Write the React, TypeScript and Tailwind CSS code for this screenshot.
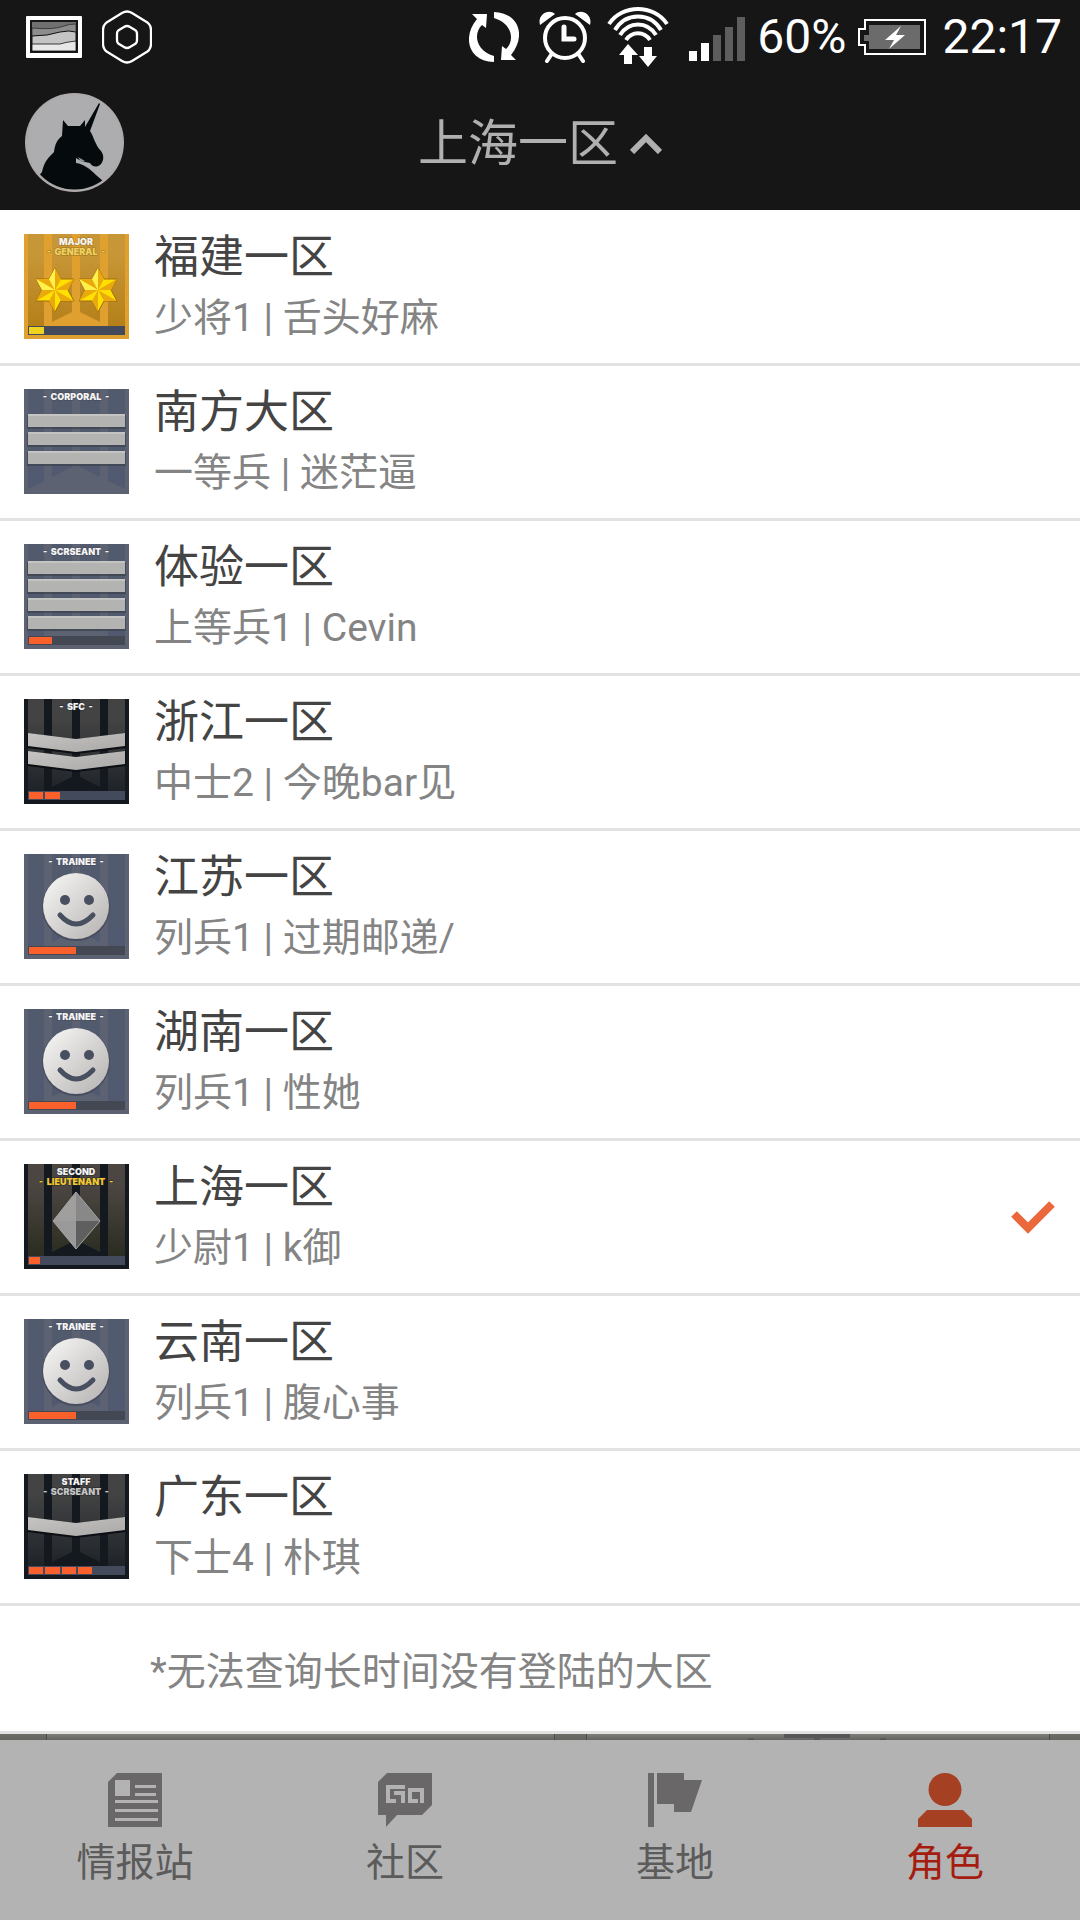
import { useState } from 'react';

type BadgeKind = 'general' | 'corporal' | 'sergeant' | 'sfc' | 'trainee' | 'lieutenant' | 'staff';

interface Zone {
  id: string;
  name: string;
  rank: string;
  player: string;
  badge: BadgeKind;
}

const zones: Zone[] = [
  { id: 'fujian', name: '福建一区', rank: '少将1', player: '舌头好麻', badge: 'general' },
  { id: 'nanfang', name: '南方大区', rank: '一等兵', player: '迷茫逼', badge: 'corporal' },
  { id: 'tiyan', name: '体验一区', rank: '上等兵1', player: 'Cevin', badge: 'sergeant' },
  { id: 'zhejiang', name: '浙江一区', rank: '中士2', player: '今晚bar见', badge: 'sfc' },
  { id: 'jiangsu', name: '江苏一区', rank: '列兵1', player: '过期邮递/', badge: 'trainee' },
  { id: 'hunan', name: '湖南一区', rank: '列兵1', player: '性她', badge: 'trainee' },
  { id: 'shanghai', name: '上海一区', rank: '少尉1', player: 'k御', badge: 'lieutenant' },
  { id: 'yunnan', name: '云南一区', rank: '列兵1', player: '腹心事', badge: 'trainee' },
  { id: 'guangdong', name: '广东一区', rank: '下士4', player: '朴琪', badge: 'staff' },
];

const themes = {
  gold: { base: '#dfa02f', top: '#c79636', bottom: '#b27d16', track: '#434a5c', outline: '#a57518' },
  slate: { base: '#5d6273', top: '#525a6d', bottom: '#505970', track: '#434853', outline: '#454b5a' },
  dark: { base: '#14191f', top: '#434343', bottom: '#1b2026', track: '#434a5b', outline: '#22262b' },
  olive: { base: '#14191f', top: '#4c4642', bottom: '#272a1d', track: '#434a5b', outline: '#22262b' },
};

const badges: Record<
  BadgeKind,
  { theme: keyof typeof themes; lines: string[]; accent?: string; bar: number[][]; barColor?: string }
> = {
  general: { theme: 'gold', lines: ['MAJOR', 'GENERAL'], accent: '#ecd062', bar: [[5, 15]], barColor: '#ecd51c' },
  corporal: { theme: 'slate', lines: ['CORPORAL'], bar: [] },
  sergeant: { theme: 'slate', lines: ['SCRSEANT'], bar: [[5, 23]] },
  sfc: { theme: 'dark', lines: ['SFC'], bar: [[5, 14], [21, 15]] },
  trainee: { theme: 'slate', lines: ['TRAINEE'], bar: [[5, 47]] },
  lieutenant: { theme: 'olive', lines: ['SECOND', 'LIEUTENANT'], accent: '#f2c832', bar: [[5, 11]] },
  staff: { theme: 'dark', lines: ['STAFF', 'SCRSEANT'], accent: '#c4c4c4', bar: [[5, 14], [21, 15], [38, 14], [54, 14]] },
};

const Star = ({ x }: { x: number }) => (
  <g transform={`translate(${x} 56)`}>
    <path d="M0-22 6-11 19-11 13 0 19 11 6 11 0 22-6 11-19 11-13 0-19-11-6-11Z" fill="#ffe000" stroke="#a06c10" strokeWidth="1" />
    <path d="M0 0 0-22 6-11ZM0 0 19-11 13 0ZM0 0 19 11 6 11ZM0 0 0 22-6 11ZM0 0-19 11-13 0ZM0 0-19-11-6-11Z" fill="#eaa90c" />
    <path d="M0 0 0-22-6-11ZM0 0-19-11-13 0Z" fill="#fff04a" />
  </g>
);

const Emblem = ({ kind, id }: { kind: BadgeKind; id: string }) => {
  const metal = `url(#metal-${id})`;

  if (kind === 'general') {
    return (
      <>
        <Star x={31} />
        <Star x={74} />
      </>
    );
  }
  if (kind === 'corporal' || kind === 'sergeant') {
    const tops = kind === 'corporal' ? [25, 43, 62] : [17, 35, 54, 72];
    return (
      <>
        {tops.map((y) => (
          <g key={y}>
            <rect x="3" y={y + 1} width="99" height="14" fill="#3c414c" opacity=".7" />
            <rect x="4" y={y} width="97" height="13" fill="#b3b3b1" />
            <rect x="4" y={y} width="97" height="2" fill="#c4c4c2" />
          </g>
        ))}
      </>
    );
  }
  if (kind === 'sfc' || kind === 'staff') {
    const tops = kind === 'sfc' ? [34, 52] : [43];
    return (
      <>
        {tops.map((y) => (
          <g key={y} transform={`translate(0 ${y})`}>
            <path d="M3 0 52 6 102 0V15L52 21 3 15Z" fill="#0b0f14" />
            <path d="M4 0 52 6 101 0V13L52 19 4 13Z" fill={metal} />
          </g>
        ))}
      </>
    );
  }
  if (kind === 'lieutenant') {
    return (
      <>
        <path d="M52 28V57H29Z" fill="#a09f9e" />
        <path d="M52 28 76 57H52Z" fill="#898888" />
        <path d="M29 57H52V85Z" fill="#9b9a9a" />
        <path d="M76 57H52V85Z" fill="#605f5f" />
        <path d="M52 28 76 57 52 85 29 57Z" fill="none" stroke="#a5a5a5" strokeWidth="1" />
      </>
    );
  }
  return (
    <>
      <circle cx="52" cy="53" r="34" fill="#474d5e" />
      <circle cx="52" cy="52" r="33" fill={metal} />
      <circle cx="41" cy="46" r="5" fill="#474f61" />
      <circle cx="65" cy="46" r="5" fill="#474f61" />
      <path d="M36 61Q52 79 69 61" fill="none" stroke="#474f61" strokeWidth="5" strokeLinecap="round" />
    </>
  );
};

const RankBadge = ({ kind, id }: { kind: BadgeKind; id: string }) => {
  const badge = badges[kind];
  const theme = themes[badge.theme];

  return (
    <svg viewBox="0 0 105 105" className="size-[105px] shrink-0" aria-hidden="true">
      <defs>
        <linearGradient id={`panel-${id}`} x1="0" y1="0" x2="0" y2="1">
          <stop offset="0.2" stopColor={theme.top} />
          <stop offset="1" stopColor={theme.bottom} />
        </linearGradient>
        <linearGradient id={`metal-${id}`} x1="0" y1="0" x2="1" y2="1">
          <stop offset="0.1" stopColor={kind === 'trainee' ? '#f2f2f1' : '#c3c2c0'} />
          <stop offset="1" stopColor={kind === 'trainee' ? '#b4b1b0' : '#a9a8a7'} />
        </linearGradient>
      </defs>
      <rect width="105" height="105" fill={theme.base} />
      <path
        d="M4 0H20V92L4 100ZM28 0H48V78L28 88ZM56 0H76V88L56 78ZM84 0H101V100L84 92Z"
        fill={`url(#panel-${id})`}
      />
      <Emblem kind={kind} id={id} />
      <g
        fontFamily="Inter, sans-serif"
        fontWeight="900"
        fontSize="9"
        textAnchor="middle"
        stroke={theme.outline}
        strokeWidth="1"
        paintOrder="stroke"
      >
        {badge.lines.map((line, i) => (
          <text key={line} x="52" y={11 + i * 10} fill={i === 1 ? badge.accent : '#f4f4f4'}>
            {i === badge.lines.length - 1 ? `-\u00a0\u00a0${line}\u00a0\u00a0-` : line}
          </text>
        ))}
      </g>
      {badge.bar.length > 0 && <rect x="4" y="92" width="97" height="9" fill={theme.track} />}
      {badge.bar.map(([x, width]) => (
        <rect key={x} x={x} y="93" width={width} height="7" fill={badge.barColor || '#f9602b'} />
      ))}
    </svg>
  );
};

const StatusBar = () => (
  <div className="flex h-[74px] items-center justify-between pr-[18px] pl-[26px] text-white">
    <div className="flex items-center gap-5">
      <svg viewBox="0 0 56 42" className="h-[42px] w-14">
        <rect width="56" height="42" rx="1" fill="#fff" />
        <rect x="4" y="4" width="48" height="33" fill="#161616" />
        <rect x="6" y="6" width="44" height="29" fill="#707070" />
        <path d="M6 12Q28 14 38 10 43 8 50 8V35H6Z" fill="#8c8c8c" stroke="#222" strokeWidth=".7" />
        <path d="M6 20Q22 20 34 16 43 14 50 16V35H6Z" fill="#c4c4c4" stroke="#111" />
        <path d="M6 28Q20 28 34 28 40 26 50 25V35H6Z" fill="#e8e8e8" stroke="#111" strokeWidth=".8" />
      </svg>
      <svg viewBox="0 0 50 54" className="h-[54px] w-[50px]" fill="none" stroke="currentColor" strokeWidth="2.3" strokeLinejoin="round">
        <path d="M20 3Q25 0 30 3L43 11Q49 14 49 20V34Q49 40 43 43L30 51Q25 54 20 51L7 43Q1 40 1 34V20Q1 14 7 11Z" />
        <path d="M22 17Q25 15 28 17L33 20Q35 21 35 24V30Q35 33 33 34L28 37Q25 39 22 37L17 34Q15 33 15 30V24Q15 21 17 20Z" />
      </svg>
    </div>
    <div className="flex items-center">
      <svg viewBox="0 0 50 50" className="mr-5 size-[50px]">
        <path d="M3 2H18L17 16 13 13C5 20 5 38 25 44V50C-1 49-7 25 8 7Z" fill="currentColor" />
        <path d="M47 48H32L33 34 37 37C45 30 45 12 25 6V0C51 1 57 25 42 43Z" fill="currentColor" />
      </svg>
      <svg viewBox="0 0 52 52" className="mr-4 size-[52px]" fill="none" stroke="currentColor">
        <ellipse cx="26" cy="27" rx="20" ry="20" strokeWidth="4" />
        <path d="M25 16V28H35" strokeWidth="5" strokeLinecap="round" />
        <path d="M12 44 8 50M40 44 44 50" strokeWidth="4" strokeLinecap="round" />
        <path d="M1 14C-2 3 10-3 16 3ZM51 14C54 3 42-3 36 3Z" fill="currentColor" stroke="none" />
      </svg>
      <svg viewBox="0 0 62 60" className="mr-5 h-[60px] w-[62px]" fill="none" stroke="currentColor" strokeWidth="4">
        <path d="M2 17C15-3 47-3 60 17M8 23C19 5 43 5 54 23M13 28C22 14 40 14 49 28M19 33C25 24 37 24 43 33" />
        <path d="M21 37 31 48H25V57H17V48H12ZM41 60 50 49H45V40H37V49H32Z" fill="currentColor" stroke="none" />
      </svg>
      <svg viewBox="0 0 56 60" className="mr-3 h-[60px] w-14">
        <path d="M0 44H8V54H0ZM12 36H20V54H12Z" fill="currentColor" />
        <path d="M24 28H32V54H24ZM36 20H44V54H36ZM48 10H56V54H48Z" fill="#5d5d5d" />
      </svg>
      <span className="mr-3 text-5xl leading-[56px]">60%</span>
      <svg viewBox="0 0 68 36" className="mr-4 h-9 w-[68px]">
        <path d="M7 1H67V35H7V26H1V10H7Z" fill="#161616" stroke="#fff" strokeWidth="2" />
        <path d="M11 6H62V30H11V22H6V16H11Z" fill="#6b6b6b" />
        <path d="M43 7 27 21H36L31 30 47 16H38Z" fill="#fff" />
      </svg>
      <span className="text-5xl leading-[56px]">22:17</span>
    </div>
  </div>
);

const Avatar = () => (
  <svg viewBox="0 0 99 99" className="size-[99px]">
    <clipPath id="avatar-clip">
      <circle cx="49.5" cy="49.5" r="47" />
    </clipPath>
    <circle cx="49.5" cy="49.5" r="49.5" fill="#aeaaac" />
    <circle cx="49.5" cy="49.5" r="47" fill="#adadb0" />
    <path
      clipPath="url(#avatar-clip)"
      d="M12 85 17 79C19 69 23 65 29 59 30 51 32 47 37 43L38 27 43 33 55 33 60 27 60 34 74 10 75 11 65 38C69 44 70 52 76 58 79 62 79 67 76 71 72 75 67 74 65 70 58 69 54 67 51 65L51 70C59 71 65 76 71 82L78 88 70 99H25Z"
      fill="#050a0c"
    />
    <path d="M53 64 56 69 60 68Z" fill="#8f9597" />
  </svg>
);

const NewsIcon = () => (
  <svg viewBox="0 0 54 54" className="size-[54px]" fill="#6a6768">
    <path fillRule="evenodd" d="M9 0H54V54H0V9ZM7 7V23H22V7ZM27 12V15H48V12ZM27 20V23H48V20ZM7 27V30H50V27ZM7 36V39H50V36ZM7 45V48H50V45Z" />
  </svg>
);

const CommunityIcon = () => (
  <svg viewBox="0 0 54 54" className="size-[54px]">
    <path d="M9 0H54V32L44 42H19L8 54V42H0V9Z" fill="#6a6768" />
    <path d="M27 14H10V28H18M16 20H25V30M32 28V17H44V30M32 15V28H40" fill="none" stroke="#b3b3b3" strokeWidth="4" />
  </svg>
);

const BaseIcon = () => (
  <svg viewBox="0 0 54 54" className="size-[54px]" fill="#6a6768">
    <path d="M0 0H6V54H0ZM9 0H36V7H54L43 39H26V31H9Z" />
  </svg>
);

const RoleIcon = () => (
  <svg viewBox="0 0 54 54" className="size-[54px]" fill="#a54022">
    <circle cx="27" cy="16.5" r="16.5" />
    <path d="M9 37H45L54 46V54H0V46Z" />
  </svg>
);

const tabs = [
  { label: '情报站', Icon: NewsIcon },
  { label: '社区', Icon: CommunityIcon },
  { label: '基地', Icon: BaseIcon },
  { label: '角色', Icon: RoleIcon },
];

const App = () => {
  const [selectedId, setSelectedId] = useState<string>('shanghai');
  const [activeTab, setActiveTab] = useState<string>('角色');
  const selected = zones.find((zone) => zone.id === selectedId);

  return (
    <div className="flex min-h-screen flex-col bg-[#777773] font-[Roboto,'Noto_Sans_CJK_SC',sans-serif]">
      <header className="bg-[#161616]">
        <StatusBar />
        <div className="grid h-[136px] grid-cols-[1fr_auto_1fr] items-center px-[25px]">
          <button type="button" aria-label="Profile" className="justify-self-start">
            <Avatar />
          </button>
          <button type="button" className="flex items-center gap-3 pt-1 text-[50px] leading-[60px] text-[#b0b0b0]">
            {selected?.name}
            <svg viewBox="0 0 32 20" className="h-5 w-8" fill="none" stroke="currentColor" strokeWidth="6">
              <path d="M2 18 16 4 30 18" />
            </svg>
          </button>
        </div>
      </header>

      <main className="bg-white pt-px">
        <ul>
          {zones.map((zone) => (
            <li key={zone.id} className="border-b-3 border-[#e2e2e2]">
              <button
                type="button"
                onClick={() => setSelectedId(zone.id)}
                className="flex h-[152px] w-full items-center px-6 pb-px text-left"
              >
                <RankBadge kind={zone.badge} id={zone.id} />
                <span className="ml-[25px] flex-1 pt-[3px]">
                  <span className="block text-[45px] leading-[61px] text-[#444]">{zone.name}</span>
                  <span className="block text-[39px] leading-[61px] text-[#848484]">
                    {zone.rank} | {zone.player}
                  </span>
                </span>
                {zone.id === selectedId && (
                  <svg viewBox="0 0 46 34" className="h-[34px] w-[46px]" fill="none" stroke="#ea683c" strokeWidth="8">
                    <path d="M4 14 18 28 42 4" />
                  </svg>
                )}
              </button>
            </li>
          ))}
        </ul>
        <p className="border-b-3 border-[#e2e2e2] pt-9 pb-7 pl-[150px] text-[39px] leading-[61px] text-[#848484]">
          *无法查询长时间没有登陆的大区
        </p>
      </main>

      <div className="min-h-[6px] flex-1 bg-linear-to-b from-[#7e7e7a] to-[#646362]">
        <svg viewBox="0 0 1080 6" preserveAspectRatio="none" className="h-[6px] w-full">
          <path d="M0 0H46V6H0ZM554 0H586V6H554ZM1049 0H1080V6H1049Z" fill="#63645b" opacity=".6" />
          <path d="M46 0H47V6H46ZM554 0H555V6H554ZM586 0H587V6H586ZM1049 0H1050V6H1049Z" fill="#4a4a46" />
          <path d="M784 0H850V4H784ZM748 4H754V6H748ZM814 4H820V6H814ZM880 4H886V6H880Z" fill="#575757" />
        </svg>
      </div>

      <nav className="grid grid-cols-4 bg-[#b3b3b3] pt-[33px] pb-8">
        {tabs.map(({ label, Icon }) => (
          <button
            key={label}
            type="button"
            onClick={() => setActiveTab(label)}
            className="flex flex-col items-center gap-3"
          >
            <Icon />
            <span
              className={
                label === activeTab
                  ? 'text-[39px] leading-[49px] text-[#a51c10]'
                  : 'text-[39px] leading-[49px] text-[#5b5b5b]'
              }
            >
              {label}
            </span>
          </button>
        ))}
      </nav>
    </div>
  );
};

export default App;
